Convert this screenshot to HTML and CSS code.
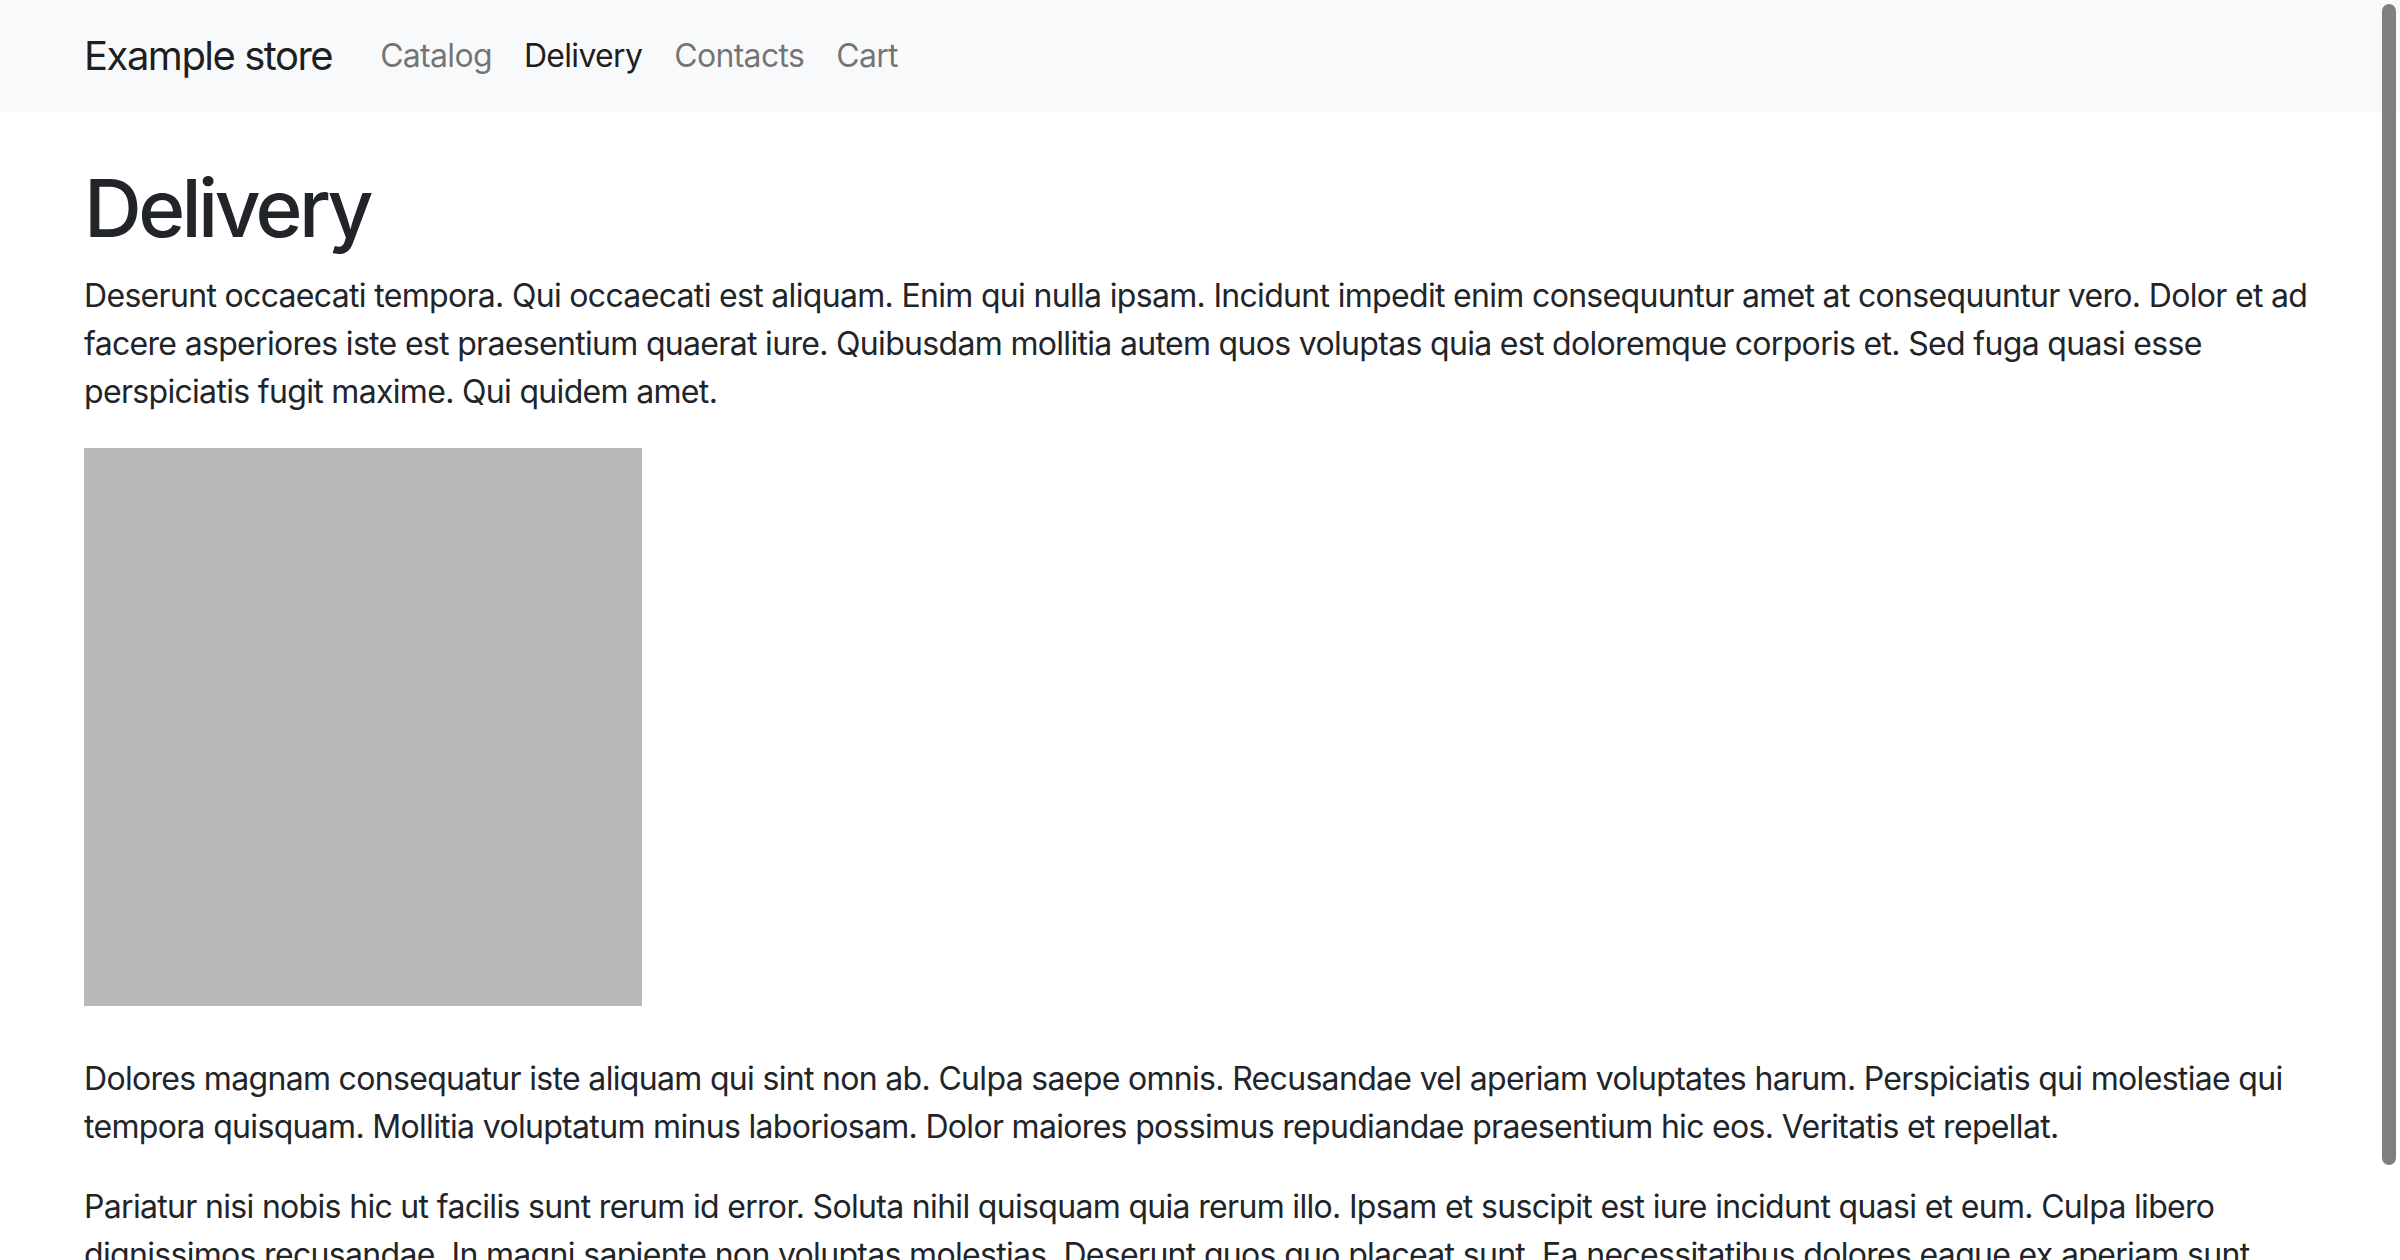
FILE: index.html
```html
<!DOCTYPE html>
<html lang="en">
<head>
<meta charset="utf-8">
<title>Delivery — Example store</title>
<link rel="stylesheet" href="styles.css">
</head>
<body>
<nav class="navbar">
  <div class="container nav-inner">
    <a class="brand" href="#">Example store</a>
    <ul class="nav-links">
      <li><a class="nav-link" href="#">Catalog</a></li>
      <li><a class="nav-link active" href="#">Delivery</a></li>
      <li><a class="nav-link" href="#">Contacts</a></li>
      <li><a class="nav-link" href="#">Cart</a></li>
    </ul>
  </div>
</nav>
<main class="container content">
  <h1 class="title">Delivery</h1>
  <p>Deserunt occaecati tempora. Qui occaecati est aliquam. Enim qui nulla ipsam. Incidunt impedit enim consequuntur amet at consequuntur vero. Dolor et ad facere asperiores iste est praesentium quaerat iure. Quibusdam mollitia autem quos voluptas quia est doloremque corporis et. Sed fuga quasi esse perspiciatis fugit maxime. Qui quidem amet.</p>
  <div class="picture" role="img" aria-label="Placeholder image"></div>
  <p>Dolores magnam consequatur iste aliquam qui sint non ab. Culpa saepe omnis. Recusandae vel aperiam voluptates harum. Perspiciatis qui molestiae qui tempora quisquam. Mollitia voluptatum minus laboriosam. Dolor maiores possimus repudiandae praesentium hic eos. Veritatis et repellat.</p>
  <p>Pariatur nisi nobis hic ut facilis sunt rerum id error. Soluta nihil quisquam quia rerum illo. Ipsam et suscipit est iure incidunt quasi et eum. Culpa libero dignissimos recusandae. In magni sapiente non voluptas molestias. Deserunt quos quo placeat sunt. Ea necessitatibus dolores eaque ex aperiam sunt.</p>
</main>
<div class="scroll-thumb"></div>
</body>
</html>
```

FILE: styles.css
```css
html {
  overflow: hidden;
}
body {
  margin: 0;
  font-family: Inter, "Noto Sans", "Liberation Sans", sans-serif;
  font-size: 32px;
  line-height: 1.5;
  letter-spacing: -0.68px;
  color: #212529;
  background: #fff;
}
.container {
  max-width: 2280px;
  margin: 0 auto;
  padding: 0 24px;
  box-sizing: border-box;
}
.navbar {
  background: #f8f9fa;
  padding: 16px 0;
}
.nav-inner {
  display: flex;
  align-items: center;
}
.brand {
  font-size: 40px;
  line-height: 60px;
  letter-spacing: -1.5px;
  padding: 10px 0;
  margin-right: 32px;
  color: rgba(0, 0, 0, 0.9);
  text-decoration: none;
}
.nav-links {
  display: flex;
  list-style: none;
  margin: 0;
  padding: 0;
}
.nav-link {
  display: block;
  padding: 16px;
  color: rgba(0, 0, 0, 0.55);
  text-decoration: none;
}
.nav-link.active {
  color: rgba(0, 0, 0, 0.9);
}
.content {
  padding-top: 48px;
}
.title {
  font-size: 80px;
  font-weight: 500;
  line-height: 1.2;
  letter-spacing: -3.6px;
  margin: 0 0 16px;
}
p {
  margin: 0 0 32px;
}
.picture {
  width: 558px;
  height: 558px;
  background: #b9b9b9;
  margin-bottom: 49px;
}
.scroll-thumb {
  position: fixed;
  top: 4px;
  right: 4px;
  width: 14px;
  height: 1161px;
  border-radius: 7px;
  background: #7f7f7f;
}
```
